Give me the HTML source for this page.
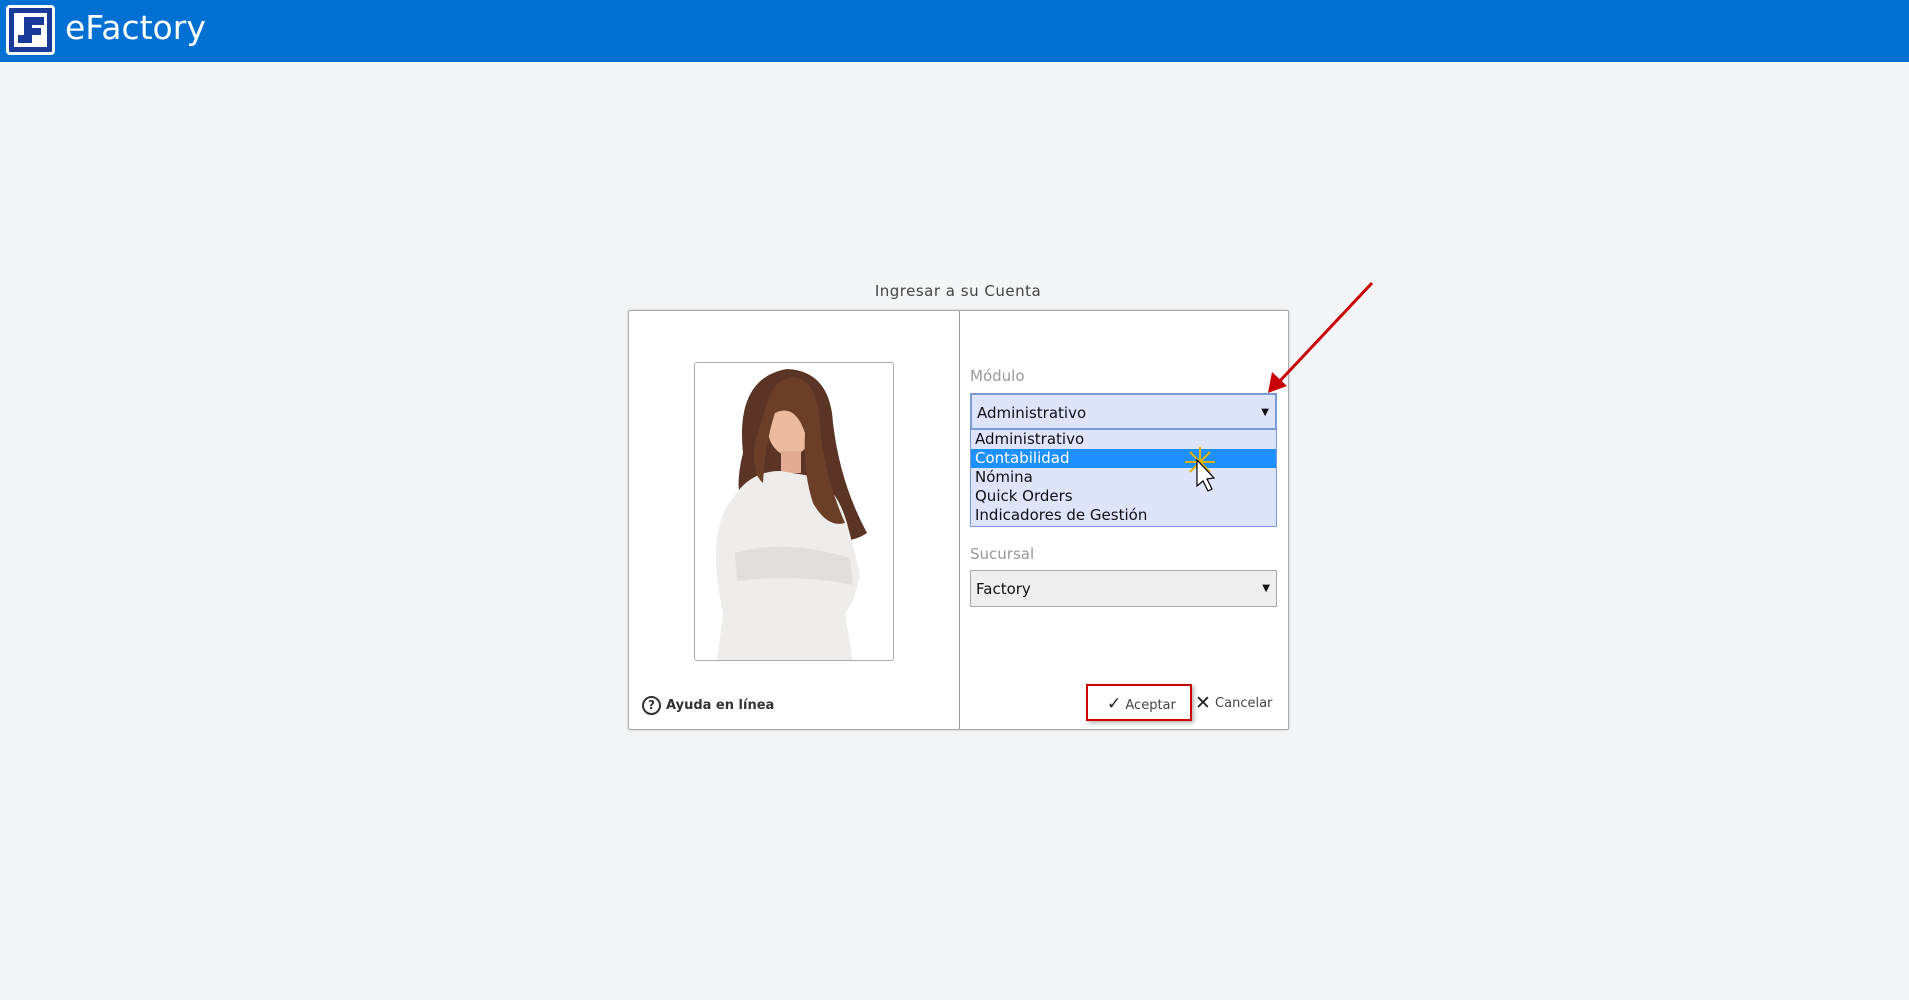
<!DOCTYPE html>
<html><head><meta charset="utf-8"><style>
*{margin:0;padding:0;box-sizing:border-box}
body{width:1909px;height:1000px;background:#f4f5f7;font-family:"DejaVu Sans","Liberation Sans",sans-serif;position:relative;overflow:hidden}
.hdr{position:absolute;left:0;top:0;width:1909px;height:62px;background:#0071d2}
.logo{position:absolute;left:6px;top:5px;width:49px;height:50px;border:3px solid #fff;border-radius:4px;background:#1a3a9a}
.logo .in{position:absolute;left:5px;top:5px;width:33px;height:34px;background:#fff}
.brand{position:absolute;left:65px;top:8px;color:#fff;font-size:33px;font-family:"DejaVu Sans",sans-serif}
.title{position:absolute;left:628px;width:660px;top:282px;text-align:center;font-size:15px;color:#444;letter-spacing:.5px}
.dlg{position:absolute;left:628px;top:310px;width:661px;height:420px;background:#fff;border:1px solid #aaa;border-radius:2px;box-shadow:0 0 2px rgba(0,0,0,.2)}
.div{position:absolute;left:330px;top:0;width:1px;height:418px;background:#999}
.photo{position:absolute;left:65px;top:51px;width:200px;height:299px;border:1px solid #aaa;border-radius:3px;overflow:hidden;background:#fff}
.lbl{position:absolute;left:341px;font-size:15px;color:#999}
.sel{position:absolute;left:341px;width:307px;height:37px;font-size:15px;color:#111;padding:9px 0 0 5px}
.sel .ar{position:absolute;right:6px;top:12px;font-size:10px}
.list{position:absolute;left:341px;top:119px;width:307px;height:97px;background:#dfe4fd;border:1px solid #7a9ad8;border-top:none;font-size:15px}
.list div{height:19px;line-height:19px;padding-left:4px;color:#111}
.list .hi{background:#1e90ff;color:#fff}
.help{position:absolute;left:13px;top:385px;font-size:13px;font-weight:bold;color:#333}
.btn{position:absolute;font-size:13px;color:#444}
</style></head><body>
<div class="hdr">
 <div class="logo"><div class="in">
  <svg width="33" height="34" viewBox="0 0 33 34"><path d="M10 4h20v8H18v3h9v7H18v8H4v-8h6z" fill="#1a3a9a"/></svg>
 </div></div>
 <div class="brand">eFactory</div>
</div>
<div class="title">Ingresar a su Cuenta</div>
<div class="dlg">
 <div class="div"></div>
 <div class="photo">
  <svg width="200" height="299" viewBox="0 0 200 299">
   <path d="M48 90 Q40 15 92 6 Q135 8 138 60 Q145 120 172 170 Q150 185 120 170 L60 160 Q35 140 48 90z" fill="#5a3424"/>
   <ellipse cx="95" cy="62" rx="23" ry="31" fill="#ecbaa0"/>
   <path d="M86 88 h20 v22 h-20z" fill="#e3ac92"/>
   <path d="M38 135 Q55 108 85 108 L110 112 Q140 118 152 160 L165 210 Q160 240 150 250 L158 299 H22 L28 250 Q18 205 22 175 Q26 148 38 135z" fill="#efecec"/>
   <path d="M40 190 Q90 175 155 195 L158 222 Q100 210 42 218z" fill="#e2dede"/>
   <path d="M72 40 Q80 14 100 14 Q122 18 125 60 Q128 110 150 160 Q132 165 118 140 Q108 110 110 70 Q100 40 80 50 Q70 80 68 120 Q56 110 60 80z" fill="#6b3e28"/>
  </svg>
 </div>
 <div class="lbl" style="top:56px">Módulo</div>
 <div class="sel" style="top:82px;background:#dfe4fd;border:2px solid #7a9ad8">Administrativo<span class="ar">▼</span></div>
 <div class="list">
  <div>Administrativo</div><div class="hi">Contabilidad</div><div>Nómina</div><div>Quick Orders</div><div>Indicadores de Gestión</div>
 </div>
 <div class="lbl" style="top:234px">Sucursal</div>
 <div class="sel" style="top:259px;background:#efefef;border:1px solid #aaa">Factory<span class="ar">▼</span></div>
 <div class="help"><span style="display:inline-block;width:19px;height:19px;border:2px solid #333;border-radius:50%;text-align:center;line-height:15px;font-size:12px;vertical-align:middle;margin-right:5px">?</span>Ayuda en línea</div>
 <div style="position:absolute;left:457px;top:373px;width:106px;height:37px;border:2px solid #c00;box-shadow:2px 2px 4px rgba(0,0,0,.3)"></div>
 <div class="btn" style="left:478px;top:383px"><span style="font-size:17px;color:#222">✓</span> Aceptar</div>
 <div class="btn" style="left:566px;top:381px"><span style="font-size:19px;color:#222;vertical-align:-2px">✕</span> Cancelar</div>
</div>
<svg style="position:absolute;left:0;top:0" width="1909" height="1000">
 <line x1="1372" y1="283" x2="1278" y2="383" stroke="#c8000a" stroke-width="3"/>
 <path d="M1268 393 L1272 372 L1287 386z" fill="#c8000a"/>
 <g stroke="#e2b400" stroke-width="2"><line x1="1185" y1="462" x2="1215" y2="462"/><line x1="1200" y1="447" x2="1200" y2="477"/><line x1="1190" y1="452" x2="1210" y2="472"/><line x1="1190" y1="472" x2="1210" y2="452"/></g>
 <path d="M1197 460 L1197 486 L1203 481 L1208 491 L1212 489 L1207 479 L1214 478z" fill="#fff" stroke="#000" stroke-width="1.2"/>
</svg>
</body></html>
